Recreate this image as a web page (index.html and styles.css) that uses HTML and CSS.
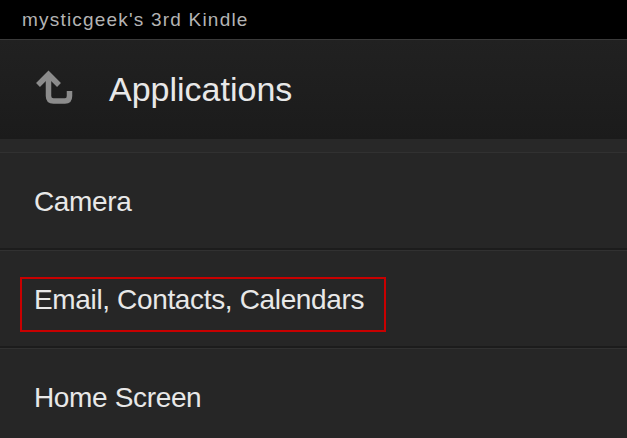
FILE: index.html
```html
<!DOCTYPE html>
<html lang="en">

<head>
    <meta charset="UTF-8">
    <meta name="viewport" content="width=device-width, initial-scale=1.0">
    <title>Applications</title>
    <link rel="stylesheet" href="styles.css">
</head>

<body>
    <div class="status">mysticgeek's 3rd Kindle</div>
    <header class="top">
        <svg class="back" width="42" height="40" viewBox="0 0 42 40">
            <path d="M6 15 L16.5 4.5 L27 15" fill="none" stroke="#8c8c8c" stroke-width="5.5" />
            <path d="M16.5 6 V26 Q16.5 31 21.5 31 H33 Q37.5 31 37.5 26 V21" fill="none" stroke="#8c8c8c" stroke-width="5.5" />
        </svg>
        <h1>Applications</h1>
    </header>
    <div class="band"></div>
    <ul class="list">
        <li>Camera</li>
        <li class="marked">Email, Contacts, Calendars<span class="box"></span></li>
        <li>Home Screen</li>
    </ul>
</body>

</html>
```

FILE: styles.css
```css
body {
    margin: 0;
    background-color: #262626;
    font-family: "Liberation Sans", Arial, Helvetica, sans-serif;
    overflow: hidden;
}

.status {
    height: 39px;
    background-color: #000;
    border-bottom: 1px solid #3a3a3a;
    color: #b4b4b4;
    font-size: 19px;
    letter-spacing: 1.2px;
    line-height: 39px;
    padding-left: 22px;
}

.top {
    height: 99px;
    display: flex;
    align-items: center;
    padding-left: 32px;
    background: linear-gradient(#212121, #1b1b1b);
}

.back {
    display: block;
}

.top h1 {
    margin: 0 0 0 35px;
    font-size: 34px;
    font-weight: normal;
    color: #e8e8e8;
}

.band {
    height: 13px;
    background-color: #282828;
}

.list {
    list-style: none;
    margin: 0;
    padding: 0;
}

.list li {
    position: relative;
    height: 93px;
    padding-top: 2px;
    display: flex;
    align-items: center;
    padding-left: 34px;
    border-top: 1px solid #313131;
    border-bottom: 2px solid #1c1c1c;
    color: #e8e8e8;
    font-size: 28px;
    letter-spacing: -0.35px;
}

.box {
    position: absolute;
    left: 20px;
    top: 26px;
    width: 362px;
    height: 51px;
    border: 2px solid #c80000;
}
```
